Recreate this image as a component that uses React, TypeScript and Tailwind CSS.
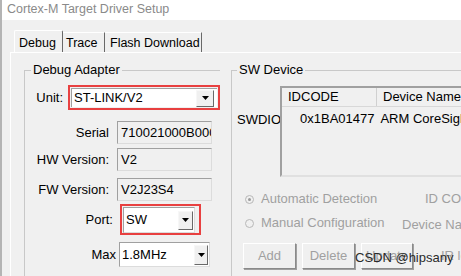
import type React from "react";
import type { ReactElement } from "react";

const font = { fontFamily: '"Liberation Sans", Arial, sans-serif' };

const Arrow = (): ReactElement => (
  <svg width="7" height="4" viewBox="0 0 7 4">
    <path d="M0 0h7L3.5 4z" fill="#000" />
  </svg>
);

const DropButton: React.FC<{ className: string }> = ({ className }): ReactElement => (
  <div
    className={`flex items-center justify-center bg-[#f0f0f0] border-t border-l border-t-[#f7f7f7] border-l-[#f7f7f7] border-r border-b border-r-[#696969] border-b-[#696969] ${className}`}
  >
    <Arrow />
  </div>
);

const Field: React.FC<{ value: string }> = ({ value }): ReactElement => (
  <div className="w-[95px] h-[23px] flex items-center bg-[#f0f0f0] border border-t-[#a0a0a0] border-l-[#a0a0a0] border-r-[#dcdcdc] border-b-[#dcdcdc] pl-[3px] overflow-hidden whitespace-nowrap text-black">
    {value}
  </div>
);

const Button: React.FC<{ label: string; w: string }> = ({ label, w }): ReactElement => (
  <div
    className={`${w} h-[26px] shrink-0 flex items-center justify-center border border-t-[#ffffff] border-l-[#ffffff] border-r-[#8a8a8a] border-b-[#8a8a8a] shadow-[1px_1px_0_#a0a0a0] text-[#a0a0a0]`}
  >
    {label}
  </div>
);

const Radio: React.FC<{ label: string; checked?: boolean }> = ({ label, checked }): ReactElement => (
  <div className="flex items-center gap-[7px] text-[#a0a0a0] h-[24px] whitespace-nowrap">
    <div className="w-[9px] h-[9px] rounded-full border border-[#b8b8b8] bg-[#f0f0f0] flex items-center justify-center">
      {checked && <div className="w-[3px] h-[3px] rounded-full bg-[#9a9a9a]" />}
    </div>
    {label}
  </div>
);

export default function App(): ReactElement {
  return (
    <div
      style={font}
      className="relative w-[461px] h-[276px] overflow-hidden bg-[#f0f0f0] border-l-2 border-l-[#b4b4b4] text-black text-[13px] whitespace-nowrap"
    >
      {/* title */}
      <div className="h-[20px] bg-white pl-[5px] text-[12.5px] leading-[18px] text-[#8a8a8a]">
        Cortex-M Target Driver Setup
      </div>

      {/* tabs */}
      <div className="h-[32px] pl-[12px] pt-[10px] flex items-end text-[12.5px]">
        <div className="h-[22px] w-[49px] pl-[4px] pt-[3px] bg-[#f0f0f0] border-l border-t border-l-white border-t-white border-r border-r-[#696969] rounded-t-[2px]">
          Debug
        </div>
        <div className="h-[20px] w-[42px] pl-[3px] border-t border-t-white border-r border-r-[#696969] leading-[20px]">
          Trace
        </div>
        <div className="h-[20px] w-[97px] pl-[5px] border-t border-t-white border-r border-r-[#696969] leading-[20px]">
          Flash Download
        </div>
      </div>

      {/* panel */}
      <div className="ml-[8px] border-l border-l-white border-t border-t-white h-[250px] flex gap-[11px] pl-[13px] pt-[17px]">
        {/* Debug Adapter */}
        <div className="relative w-[196px] h-[240px] border-l border-t border-[#c8c8c8] shrink-0">
          <div className="absolute -top-[10px] left-[6px] px-[2px] bg-[#f0f0f0] leading-[18px]">
            Debug Adapter
          </div>
          <div className="flex flex-col">
            <div className="flex items-center mt-[14px]">
              <div className="w-[39px] text-right">Unit:</div>
              <div className="ml-[5px] w-[154px] h-[25px] border-2 border-[#e84040] p-[1px] pl-[1px]">
                <div className="h-full w-[146px] bg-white border-t border-l border-[#a0a0a0] flex items-center justify-between pl-[2px] pr-[3px]">
                  <span>ST-LINK/V2</span>
                  <DropButton className="w-[18px] h-[17px]" />
                </div>
              </div>
            </div>
            <div className="flex items-center mt-[11px]">
              <div className="w-[84px] text-right">Serial</div>
              <div className="ml-[8px]">
                <Field value="710021000B0000" />
              </div>
            </div>
            <div className="flex items-center mt-[4px]">
              <div className="w-[84px] text-right">HW Version:</div>
              <div className="ml-[8px]">
                <Field value="V2" />
              </div>
            </div>
            <div className="flex items-center mt-[7px]">
              <div className="w-[84px] text-right">FW Version:</div>
              <div className="ml-[8px]">
                <Field value="V2J23S4" />
              </div>
            </div>
            <div className="flex items-center mt-[3px]">
              <div className="w-[88px] text-right">Port:</div>
              <div className="ml-[7px] w-[81px] h-[31px] border-2 border-[#e84040] pt-[1px] pl-[1px]">
                <div className="h-[26px] w-[72px] bg-white border border-t-[#a0a0a0] border-l-[#a0a0a0] border-r-[#dcdcdc] border-b-[#dcdcdc] flex items-center justify-between pl-[2px] pr-[1px]">
                  <span>SW</span>
                  <DropButton className="w-[15px] h-[19px]" />
                </div>
              </div>
            </div>
            <div className="flex items-center mt-[7px]">
              <div className="w-[91px] text-right">Max</div>
              <div className="ml-[3px] w-[91px] h-[25px] bg-white border border-t-[#a0a0a0] border-l-[#a0a0a0] border-r-[#dcdcdc] border-b-[#dcdcdc] flex items-center justify-between pl-[2px] pr-[1px]">
                <span>1.8MHz</span>
                <DropButton className="w-[14px] h-[20px]" />
              </div>
            </div>
          </div>
        </div>

        {/* SW Device */}
        <div className="relative w-[240px] h-[240px] border-l border-t border-[#c8c8c8] shrink-0">
          <div className="absolute -top-[10px] left-[5px] px-[2px] bg-[#f0f0f0] leading-[18px]">
            SW Device
          </div>
          <div className="flex mt-[15px]">
            <div className="w-[48px] shrink-0 pl-[5px] pt-[24px]">SWDIO</div>
            <div className="w-[200px] shrink-0 h-[91px] bg-[#f0f0f0] border-2 border-t-[#a0a0a0] border-l-[#a0a0a0] border-r-[#e0e0e0] border-b-[#e0e0e0]">
              <div className="flex h-[19px] border-b border-[#d8d8d8] leading-[18px]">
                <div className="w-[95px] pl-[6px] border-r border-[#d0d0d0]">IDCODE</div>
                <div className="pl-[6px]">Device Name</div>
              </div>
              <div className="flex leading-[24px]">
                <div className="w-[96px] pl-[18px]">0x1BA01477</div>
                <div className="pl-[6px]">ARM CoreSight SW-DP</div>
              </div>
            </div>
          </div>
          <div className="flex mt-[10px]">
            <div className="pl-[13px] w-[170px] shrink-0">
              <Radio label="Automatic Detection" checked />
              <Radio label="Manual Configuration" />
            </div>
            <div className="flex flex-col text-[#a0a0a0]">
              <div className="h-[24px] leading-[24px] pl-[23px]">ID CODE</div>
              <div className="h-[24px] leading-[28px]">Device Name</div>
            </div>
          </div>
          <div className="flex items-center mt-[8px] pl-[11px] gap-[6px]">
            <Button label="Add" w="w-[53px]" />
            <Button label="Delete" w="w-[53px]" />
            <Button label="Update" w="w-[52px]" />
            <span className="ml-[22px] text-[#a0a0a0]">IR len</span>
          </div>
        </div>
      </div>

      <div className="absolute left-[353px] top-[249px] leading-[18px] text-[#2a2a2a]">
        CSDN @hipsany
      </div>
    </div>
  );
}
